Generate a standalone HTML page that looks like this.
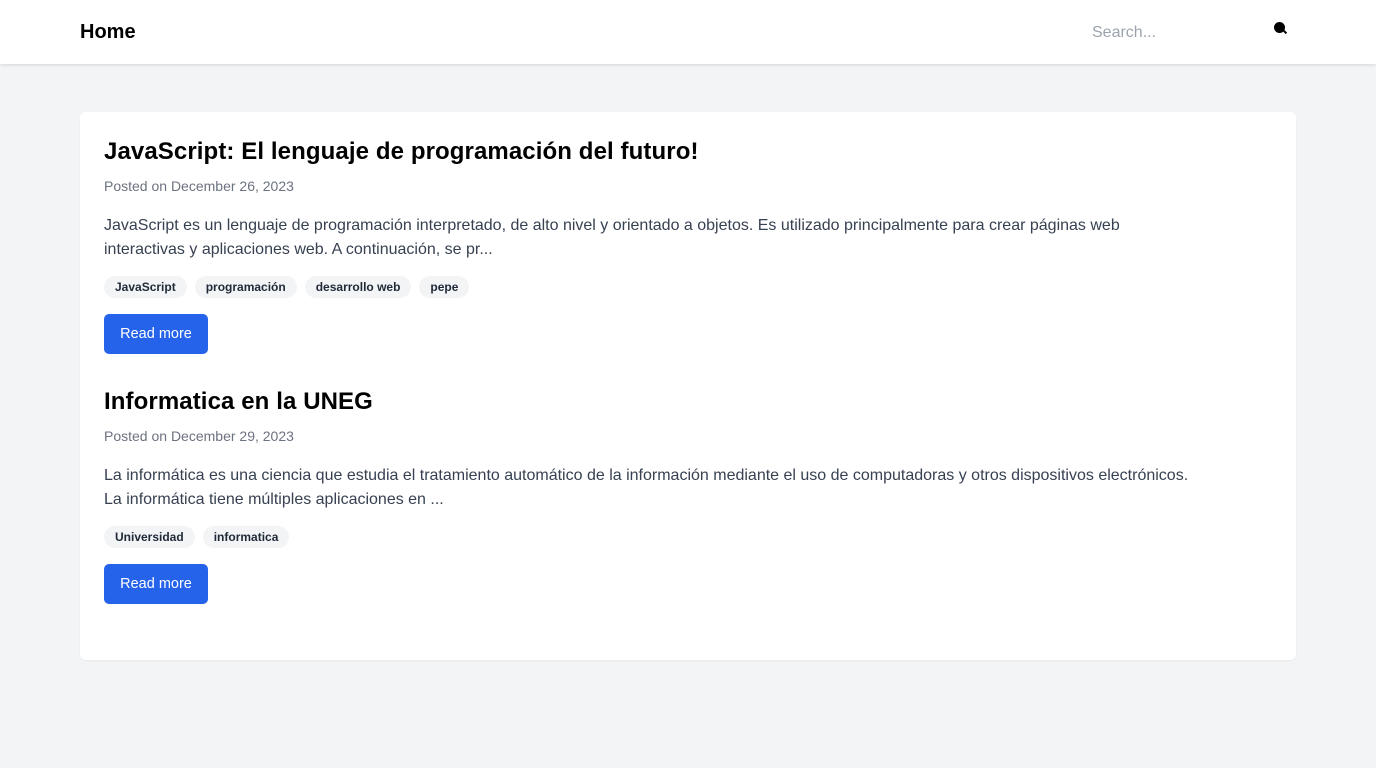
<!DOCTYPE html>
<html><head><meta charset="utf-8"><style>
*{margin:0;padding:0;box-sizing:border-box}
body{width:1376px;height:768px;background:#f3f4f6;font-family:"Liberation Sans",sans-serif;color:#111;overflow:hidden}
.nav{height:64px;background:#fff;box-shadow:0 1px 3px rgba(0,0,0,.12);position:relative}
.home{position:absolute;left:80px;top:21px;font-size:20px;font-weight:bold;color:#000}
.search{position:absolute;left:1092px;top:24px;font-size:16px;color:#9ca3af}
.icon{position:absolute;left:1274px;top:22px;width:11px;height:11px;border-radius:50%;background:#000}
.icon:after{content:"";position:absolute;left:9px;top:9px;width:4px;height:2px;background:#000;transform:rotate(45deg)}
.card{position:absolute;left:80px;top:112px;width:1216px;height:548px;background:#fff;border-radius:6px;box-shadow:0 1px 2px rgba(0,0,0,.05)}
.post{position:absolute;left:24px}
h2{font-size:24px;font-weight:bold;color:#000;line-height:30px;letter-spacing:.1px}
.date{margin-top:10px;font-size:14px;color:#6b7280;line-height:18px}
.ex{margin-top:19px;font-size:16px;line-height:24px;color:#374151;white-space:nowrap}
.tags{margin-top:14px;display:flex;gap:8px}
.tag{background:#f3f4f6;border-radius:11px;height:22px;line-height:22px;padding:0 11px;font-size:12px;font-weight:bold;color:#1f2937}
.btn{margin-top:16px;display:inline-block;background:#2563eb;color:#fff;border-radius:5px;width:104px;height:40px;line-height:40px;text-align:center;font-size:14.5px}
</style></head><body>
<div class="nav"><div class="home">Home</div><div class="search">Search...</div><div class="icon"></div></div>
<div class="card">
<div class="post" style="top:25px">
<h2>JavaScript: El lenguaje de programación del futuro!</h2>
<div class="date">Posted on December 26, 2023</div>
<div class="ex">JavaScript es un lenguaje de programación interpretado, de alto nivel y orientado a objetos. Es utilizado principalmente para crear páginas web<br>interactivas y aplicaciones web. A continuación, se pr...</div>
<div class="tags"><span class="tag">JavaScript</span><span class="tag">programación</span><span class="tag">desarrollo web</span><span class="tag">pepe</span></div>
<div class="btn">Read more</div>
</div>
<div class="post" style="top:275px">
<h2>Informatica en la UNEG</h2>
<div class="date">Posted on December 29, 2023</div>
<div class="ex">La informática es una ciencia que estudia el tratamiento automático de la información mediante el uso de computadoras y otros dispositivos electrónicos.<br>La informática tiene múltiples aplicaciones en ...</div>
<div class="tags"><span class="tag">Universidad</span><span class="tag">informatica</span></div>
<div class="btn">Read more</div>
</div>
</div>
</body></html>
